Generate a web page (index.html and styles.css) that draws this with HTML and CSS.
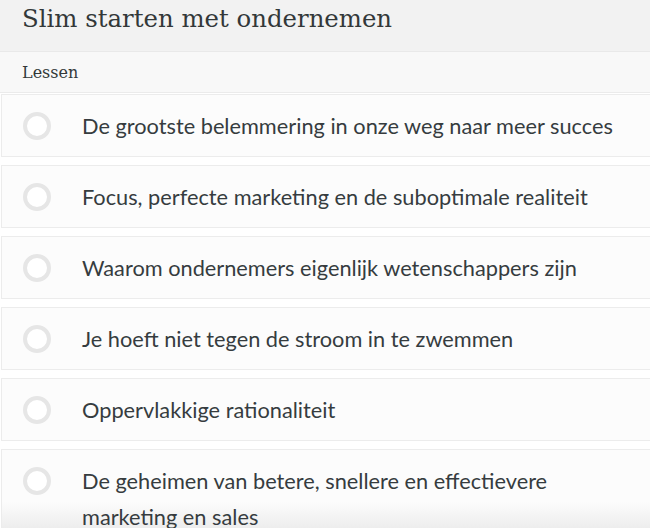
FILE: index.html
```html
<!DOCTYPE html>
<html lang="nl">
<head>
<meta charset="utf-8">
<title>Slim starten met ondernemen</title>
<link rel="stylesheet" href="styles.css">
</head>
<body>
<div class="course">
  <header class="course-head">
    <h1 class="course-title">Slim starten met ondernemen</h1>
  </header>
  <div class="section-head">Lessen</div>
  <ul class="lessons">
    <li class="lesson"><span class="check"></span><span class="lesson-title">De grootste belemmering in onze weg naar meer succes</span></li>
    <li class="lesson"><span class="check"></span><span class="lesson-title">Focus, perfecte marketing en de suboptimale realiteit</span></li>
    <li class="lesson"><span class="check"></span><span class="lesson-title">Waarom ondernemers eigenlijk wetenschappers zijn</span></li>
    <li class="lesson"><span class="check"></span><span class="lesson-title">Je hoeft niet tegen de stroom in te zwemmen</span></li>
    <li class="lesson"><span class="check"></span><span class="lesson-title">Oppervlakkige rationaliteit</span></li>
    <li class="lesson lesson-last"><span class="check"></span><span class="lesson-title">De geheimen van betere, snellere en effectievere marketing en sales</span></li>
  </ul>
</div>
</body>
</html>
```

FILE: styles.css
```css
* { box-sizing: border-box; }
html, body { margin: 0; padding: 0; background: #ffffff; }
body { overflow: hidden; height: 528px; }
.course { width: 650px; height: 528px; overflow: hidden; }
.course-head {
  background: #f2f2f2;
  height: 52px;
  border-bottom: 1px solid #e9e9e9;
  padding: 0 22px;
}
.course-title {
  margin: 0;
  font-family: "DejaVu Serif", "Liberation Serif", serif;
  font-weight: normal;
  font-size: 24.4px;
  line-height: 38px;
  color: #333839;
}
.section-head {
  background: #f8f8f8;
  height: 41px;
  border-bottom: 1px solid #ebebeb;
  padding: 0 22px;
  font-family: "DejaVu Serif", "Liberation Serif", serif;
  font-size: 16px;
  line-height: 41px;
  color: #333839;
}
.lessons {
  list-style: none;
  margin: 1px 0 0 1px;
  padding: 0;
  display: flex;
  flex-direction: column;
  gap: 8px;
}
.lesson {
  display: flex;
  align-items: flex-start;
  background: #fcfcfc;
  border: 1px solid #ececec;
  padding: 13px 20px 12px 21px;
  width: 652px;
}
.lesson-last {
  background: linear-gradient(to bottom, #fcfcfc 0, #fcfcfc 52px, #ececec 80px);
}
.check {
  flex: none;
  width: 28px;
  height: 28px;
  margin-top: 4px;
  border-radius: 50%;
  border: 4px solid #e6e6e6;
  background: #ffffff;
}
.lesson-title {
  margin-left: 31px;
  max-width: 545px;
  font-family: Lato, "Noto Sans", sans-serif;
  font-size: 21.75px;
  line-height: 36px;
  color: #363c3f;
}
```
